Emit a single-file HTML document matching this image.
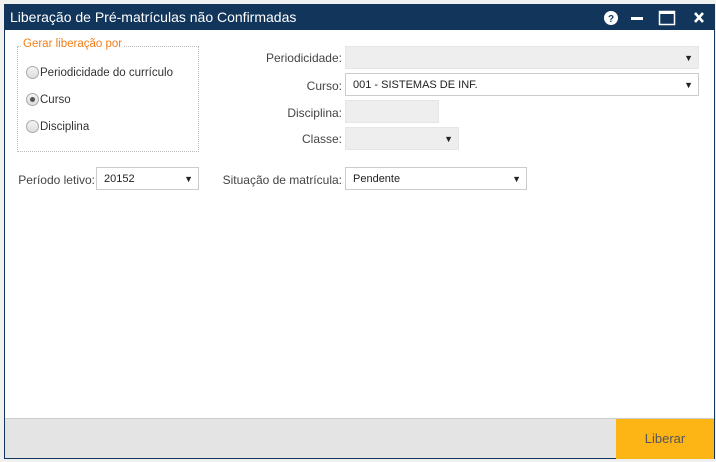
<!DOCTYPE html>
<html><head><meta charset="utf-8"><style>
*{margin:0;padding:0;box-sizing:border-box}
body{width:716px;height:462px;background:#f0f0f0;font-family:"Liberation Sans",sans-serif;font-size:11px;color:#333;position:relative;overflow:hidden}
.win{position:absolute;left:4px;top:4px;width:711px;height:455px;background:#fff;border:1px solid #12355b}
.title{position:absolute;left:0;top:0;width:100%;height:25px;background:#12355b;color:#fff;font-size:14px;line-height:25px;padding-left:5px}
.a{position:absolute}
.lbl{position:absolute;text-align:right;font-size:12px;color:#444}
.box{position:absolute;border:1px solid #ccc;background:#fff;font-size:11px;line-height:19px;padding-top:2px;padding-left:7px;color:#222}
.dis{background:#eee;border-color:#e6e6e6}
.arr{position:absolute;right:5px;top:2px;font-size:9px}
.grp{position:absolute;left:12px;top:41px;width:182px;height:106px;border:1px dotted #bbb}
.leg{position:absolute;left:16px;top:33px;background:#fff;color:#f07f1a;font-size:11.5px;padding:0 2px}
.rad{position:absolute;left:21px;width:13px;height:13px;border-radius:50%;border:1px solid #aaa;background:linear-gradient(#f4f4f4,#ddd)}
.rl{position:absolute;left:35px;font-size:11.5px;color:#333}
.foot{position:absolute;left:0;top:413px;width:100%;height:40px;background:#e4e4e4;border-top:1px solid #ccc}
.btn{position:absolute;right:0;top:0;width:98px;height:40px;background:#fdb415;color:#555;font-size:13px;text-align:center;line-height:40px}
</style></head><body>
<div class="win">
<div class="title">Liberação de Pré-matrículas não Confirmadas
<svg class="a" style="left:597px;top:4px" width="110" height="18">
<circle cx="9" cy="9" r="7" fill="#fff"/><text x="9" y="13" text-anchor="middle" font-size="10" font-weight="bold" fill="#12355b" font-family="Liberation Sans">?</text>
<rect x="29" y="8" width="12" height="3" fill="#fff"/>
<rect x="57.5" y="2.5" width="15" height="13" fill="none" stroke="#fff" stroke-width="1.5"/><rect x="57" y="2" width="16" height="3" fill="#fff"/>
<path d="M93 4l8 9M101 4l-8 9" stroke="#fff" stroke-width="2.6"/>
</svg></div>
<div class="grp"></div><div class="leg">Gerar liberação por</div>
<div class="rad" style="top:61px"></div><div class="rl" style="top:62px">Periodicidade do currículo</div>
<div class="rad" style="top:88px"></div><div class="a" style="left:25px;top:92px;width:5px;height:5px;border-radius:50%;background:#555"></div><div class="rl" style="top:89px">Curso</div>
<div class="rad" style="top:115px"></div><div class="rl" style="top:116px">Disciplina</div>
<div class="lbl" style="left:179px;width:158px;top:46px">Periodicidade:</div>
<div class="box dis" style="left:340px;top:41px;width:354px;height:23px"><span class="arr">▼</span></div>
<div class="lbl" style="left:179px;width:158px;top:74px">Curso:</div>
<div class="box" style="left:340px;top:68px;width:354px;height:23px">001 - SISTEMAS DE INF.<span class="arr">▼</span></div>
<div class="lbl" style="left:179px;width:158px;top:101px">Disciplina:</div>
<div class="box dis" style="left:340px;top:95px;width:94px;height:23px"></div>
<div class="lbl" style="left:179px;width:158px;top:127px">Classe:</div>
<div class="box dis" style="left:340px;top:122px;width:114px;height:23px"><span class="arr">▼</span></div>
<div class="lbl" style="left:0;width:90px;top:168px">Período letivo:</div>
<div class="box" style="left:91px;top:162px;width:103px;height:23px">20152<span class="arr">▼</span></div>
<div class="lbl" style="left:179px;width:158px;top:168px">Situação de matrícula:</div>
<div class="box" style="left:340px;top:162px;width:182px;height:23px">Pendente<span class="arr">▼</span></div>
<div class="foot"><div class="btn">Liberar</div></div>
</div>
</body></html>
